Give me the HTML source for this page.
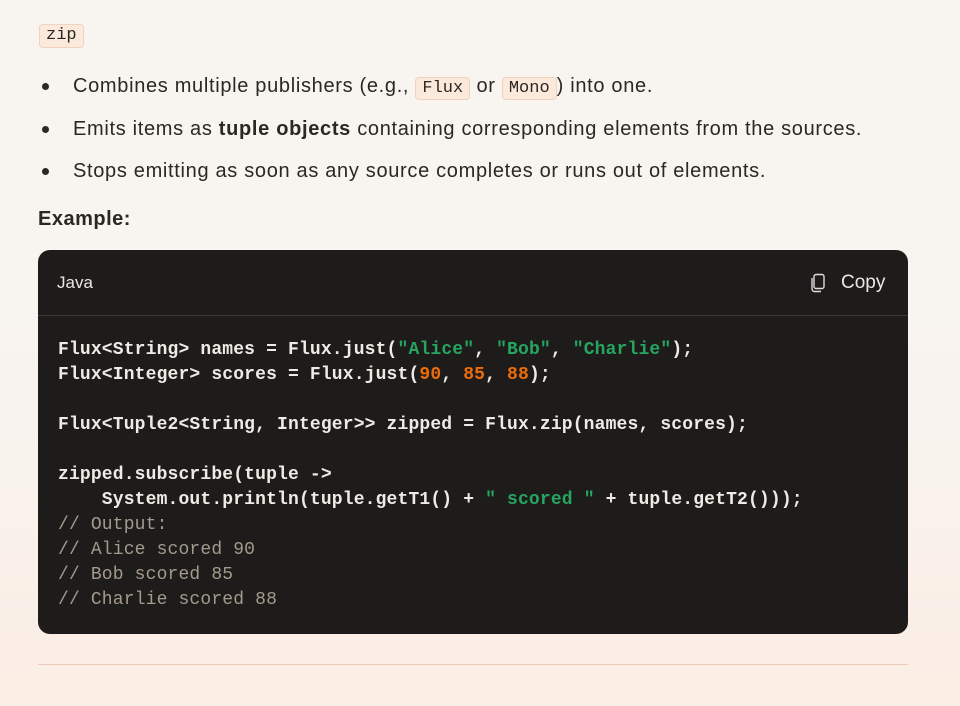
<!DOCTYPE html>
<html><head><style>
body{margin:0;width:960px;height:706px;overflow:hidden;background:linear-gradient(#f8f5f1 0%,#f8f3ee 60%,#fbede4 100%);font-family:"Liberation Sans",sans-serif;color:#2b2723;}
.c{font-family:"Liberation Mono",monospace;font-size:17px;letter-spacing:0;background:#fbe9dc;border:1px solid #f0d2bf;border-radius:4px;padding:1px 6px;line-height:20px;color:#2b2723}
.t{position:absolute;font-size:20px;letter-spacing:0.68px;white-space:nowrap}
.dot{position:absolute;width:7px;height:7px;border-radius:50%;background:#2b2723}
.box{position:absolute;left:38px;top:250px;width:870px;height:384px;background:#1e1c1b;border-radius:12px}
pre{position:absolute;left:20px;top:88px;margin:0;font-family:"Liberation Mono",monospace;font-weight:bold;font-size:18px;letter-spacing:0.15px;line-height:25px;color:#eeeae4}
.s{color:#25a55f}.n{color:#ec6d0a}.m{color:#a39a8c;font-weight:normal}
</style></head><body>
<span class="c" style="position:absolute;left:39px;top:24px">zip</span>
<div class="dot" style="left:42px;top:83px"></div>
<div class="t" style="left:73px;top:75px">Combines multiple publishers (e.g., <span class="c">Flux</span> or <span class="c">Mono</span>) into one.</div>
<div class="dot" style="left:42px;top:126px"></div>
<div class="t" style="left:73px;top:118px">Emits items as <b>tuple objects</b> containing corresponding elements from the sources.</div>
<div class="dot" style="left:42px;top:168px"></div>
<div class="t" style="left:73px;top:160px">Stops emitting as soon as any source completes or runs out of elements.</div>
<div class="t" style="left:38px;top:208px;font-weight:bold;letter-spacing:0.5px">Example:</div>
<div class="box">
<div style="position:absolute;left:19px;top:23px;color:#ece7e0;font-size:17px">Java</div>
<svg style="position:absolute;left:771px;top:23px" width="18" height="20" viewBox="0 0 18 20"><rect x="5" y="1.5" width="10" height="14" rx="2" fill="none" stroke="#ddd" stroke-width="1.4"/><path d="M3 5v11a2.5 2.5 0 0 0 2.5 2.5H12" fill="none" stroke="#ddd" stroke-width="1.4"/></svg>
<div style="position:absolute;left:803px;top:22px;color:#ece7e0;font-size:19px">Copy</div>
<div style="position:absolute;left:0;right:0;top:65px;height:1px;background:#3d3a37"></div>
<pre>Flux&lt;String&gt; names = Flux.just(<span class="s">"Alice"</span>, <span class="s">"Bob"</span>, <span class="s">"Charlie"</span>);
Flux&lt;Integer&gt; scores = Flux.just(<span class="n">90</span>, <span class="n">85</span>, <span class="n">88</span>);

Flux&lt;Tuple2&lt;String, Integer&gt;&gt; zipped = Flux.zip(names, scores);

zipped.subscribe(tuple -&gt;
    System.out.println(tuple.getT1() + <span class="s">" scored "</span> + tuple.getT2()));
<span class="m">// Output:
// Alice scored 90
// Bob scored 85
// Charlie scored 88</span></pre>
</div>
<div style="position:absolute;left:38px;top:664px;width:870px;height:1px;background:#eccbb8"></div>
</body></html>
